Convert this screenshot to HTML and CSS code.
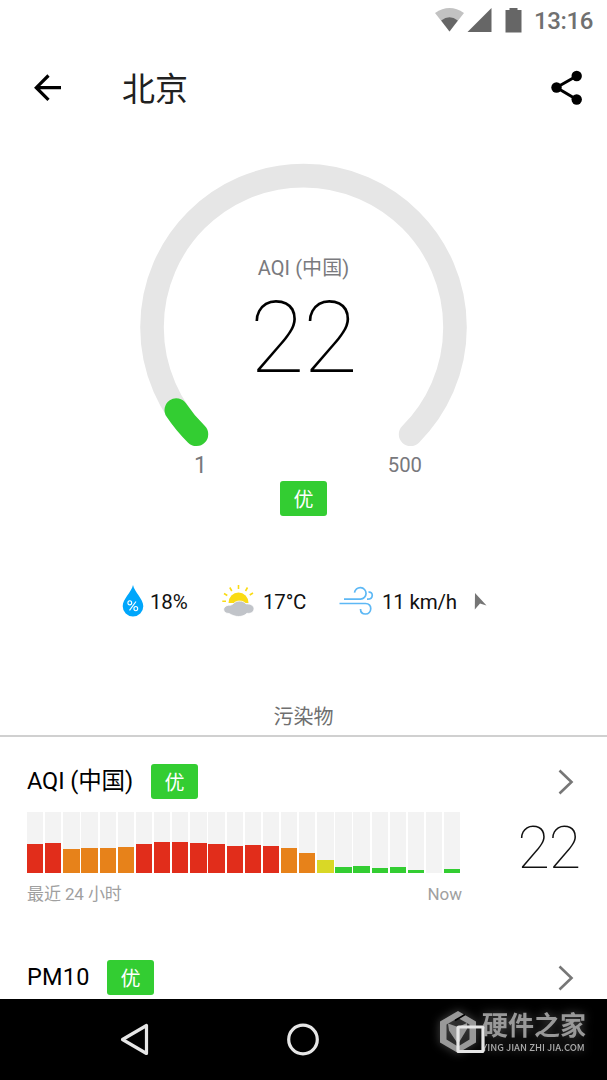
FILE: index.html
```html
<!DOCTYPE html>
<html lang="zh-CN">
<head>
<meta charset="utf-8">
<title>北京</title>
<link rel="stylesheet" href="styles.css">
</head>
<body>
<main class="screen">
  <header class="status">
    <svg class="status-icons" width="90" height="40" viewBox="0 0 90 40">
      <path d="M0 13Q14.500 3 29 13L14.500 31.500Z" fill="#c2c2c2"/>
      <path d="M6.200 20.500Q14.500 14 22.800 20.500L14.500 31.500Z" fill="#666"/>
      <path d="M56.500 8V32H32.500Z" fill="#666"/>
      <path d="M70.500 10h4V8h8v2h4v22.500h-16z" fill="#666"/>
    </svg>
    <span class="clock">13:16</span>
  </header>
  <div class="appbar">
    <svg class="back" width="28" height="28" viewBox="0 0 28 28" fill="none" stroke="#000" stroke-width="3.200"><path d="M27 13.700H3M14.500 1.500L2.300 13.700l12.200 12.200"/></svg>
    <h1 class="title">北京</h1>
    <svg class="share" width="32" height="36" viewBox="0 0 32 36"><path d="M25.700 6L5.500 17.500l20.200 12" fill="none" stroke="#000" stroke-width="3"/><circle cx="25.700" cy="6" r="5.200"/><circle cx="5.500" cy="17.500" r="5.200"/><circle cx="25.700" cy="29.500" r="5.200"/></svg>
  </div>

  <section class="gauge">
    <svg class="dial" width="328" height="290" viewBox="0 0 328 290" fill="none" stroke-width="23.600" stroke-linecap="round">
      <path d="M56.400 271.300A151.500 151.500 0 1 1 270.600 271.300" stroke="#e6e6e6"/>
      <path d="M36.300 247A151.500 151.500 0 0 0 56.400 271.300" stroke="#33cd32"/>
    </svg>
    <div class="reading">
      <span class="caption">AQI (中国)</span>
      <span class="value">22</span>
    </div>
  </section>
  <div class="range"><span class="min">1</span><span class="max">500</span></div>
  <div class="verdict"><span class="badge">优</span></div>

  <section class="weather">
    <svg class="drop" width="22" height="34" viewBox="0 0 22 34"><path d="M11 1C9.500 8 .700 15 .700 22.200a10.300 10.300 0 0 0 20.600 0C21.300 15 12.500 8 11 1z" fill="#00a6fb"/><g fill="none" stroke="#fff" stroke-width="1.100"><ellipse cx="7.800" cy="18.800" rx="1.900" ry="2.100"/><ellipse cx="13.800" cy="24.600" rx="1.900" ry="2.100"/><path d="M14 17.500L7.500 26.300"/></g></svg>
    <span class="humidity">18%</span>
    <svg class="sun" width="34" height="34" viewBox="0 0 34 34"><path d="M6.500 19a10 10.500 0 0 1 20 0z" fill="#fadb14"/><path d="M16.500 5V1M9.800 7L7.800 3.500M23.500 7l2-3.500M5.300 11.500L2 9.500M27.700 11l3.300-2M4 17.200H.300" stroke="#fadb14" stroke-width="1.600"/><path d="M7 29.500C.500 29.500-.500 22.500 6.500 21.200c2 .100 3.500-.200 5-1.700 3-3.300 9.500-3.300 12.500.300 5 0 8 2 8 5 0 3.500-3.500 5-7 4.500-2.500 2.500-5.500 3.200-8.500 3.200s-6-1-9.500-3z" fill="#c1c4c9" stroke="#fff" stroke-width=".8"/></svg>
    <span class="temperature">17°C</span>
    <svg class="wind" width="36" height="30" viewBox="0 0 36 30" fill="none" stroke="#5db8f5" stroke-width="1.700"><path d="M5 13.200h16.500a5.800 5.800 0 1 0-6-6.500M28 13.200c7 .300 6.500-8 1.500-7M.500 17.500H26.500c7.500 0 6.500 10.500 0 10.500-3 0-5-2-5-5"/></svg>
    <span class="speed">11 km/h</span>
    <svg class="pointer" width="13" height="19" viewBox="0 0 13 19"><path d="M1 1L12.500 13.500 6 11.500.800 17.500z" fill="#757575"/></svg>
  </section>

  <h2 class="section-title">污染物</h2>

  <section class="pollutant">
    <div class="row-head">
      <span class="name">AQI (中国)</span><span class="badge">优</span>
      <svg class="chevron" width="16" height="26" viewBox="0 0 16 26"><path d="M1.500 1.500L13.500 13 1.500 24.500"/></svg>
    </div>
    <div class="history">
      <div class="chart">
        <i class="bar red" style="--h:29.3px"></i><i class="bar red" style="--h:29.8px"></i><i class="bar orange" style="--h:24px"></i><i class="bar orange" style="--h:24.8px"></i><i class="bar orange" style="--h:24.8px"></i><i class="bar orange" style="--h:25.8px"></i>
        <i class="bar red" style="--h:28.8px"></i><i class="bar red" style="--h:31px"></i><i class="bar red" style="--h:30.5px"></i><i class="bar red" style="--h:29.8px"></i><i class="bar red" style="--h:28.8px"></i><i class="bar red" style="--h:27px"></i>
        <i class="bar red" style="--h:28px"></i><i class="bar red" style="--h:26.5px"></i><i class="bar orange" style="--h:24.8px"></i><i class="bar orange" style="--h:20.3px"></i><i class="bar yellow" style="--h:12.6px"></i><i class="bar green" style="--h:6.3px"></i>
        <i class="bar green" style="--h:7px"></i><i class="bar green" style="--h:5px"></i><i class="bar green" style="--h:5.8px"></i><i class="bar green" style="--h:3.3px"></i><i class="bar" style="--h:0px"></i><i class="bar green" style="--h:4px"></i>
      </div>
      <span class="current">22</span>
    </div>
    <div class="axis"><span class="span-label">最近 24 小时</span><span>Now</span></div>
  </section>

  <section class="pollutant next">
    <div class="row-head">
      <span class="name pm">PM10</span><span class="badge">优</span>
      <svg class="chevron" width="16" height="26" viewBox="0 0 16 26"><path d="M1.500 1.500L13.500 13 1.500 24.500"/></svg>
    </div>
  </section>

  <nav class="navbar">
    <svg class="nav-back" width="30" height="34" viewBox="0 0 30 34"><path d="M27.500 2.500V30.500L3.500 16.500z"/></svg>
    <svg class="nav-home" width="34" height="34" viewBox="0 0 34 34"><circle cx="17" cy="16.500" r="14.300"/></svg>
    <svg class="nav-recent" width="30" height="30" viewBox="0 0 30 30"><rect x="2" y="2" width="25" height="24.500" rx="1"/></svg>
    <div class="watermark">
      <svg width="38" height="44" viewBox="0 0 38 44"><path fill="#999" fill-rule="evenodd" d="M19 1L37 11.500V32.500L19 43 1 32.500V11.500zM19 8L7.500 14.500V29.500L19 36.500 30.500 29.500V14.500z"/><path fill="#999" d="M9 13.500l10 3.500 9-4v6l-9 15-9-13.500z"/><path d="M16 10.500l10-6" stroke="#000" stroke-width="1.500"/></svg>
      <div class="brand"><span class="brand-cn">硬件之家</span><span class="brand-en">YING JIAN ZHI JIA.COM</span></div>
    </div>
  </nav>
</main>
</body>
</html>
```
FILE: styles.css
```css
* { box-sizing: border-box; }
body { margin: 0; background: #fff; }
svg { display: block; flex: none; }
.screen {
  width: 607px; height: 1080px; overflow: hidden;
  display: flex; flex-direction: column;
  font-family: Roboto, "Noto Sans CJK SC", sans-serif;
  color: #111; white-space: nowrap;
}
.status { height: 40px; display: flex; justify-content: flex-end; padding-right: 13px; flex: none; }
.status-icons { margin-right: 9px; }
.clock { font-size: 24px; font-weight: 500; line-height: 42px; color: #707070; width: 60px; letter-spacing: -.4px; }
.appbar { height: 96px; flex: none; display: flex; align-items: center; padding: 0 24px 0 34px; }
.title { margin: 4px 0 0 60px; font-size: 33px; font-weight: 400; line-height: 40px; color: #212121; }
.share { margin-left: auto; }

.gauge { height: 319px; flex: none; padding: 27px 0 0 140px; display: grid; grid-template-columns: 327px; align-items: start; }
.dial, .reading { grid-area: 1 / 1; }
.reading { padding-top: 91px; display: flex; flex-direction: column; align-items: center; }
.caption { font-size: 20px; line-height: 28px; color: #7a7a7e; letter-spacing: .1px; }
.value { font-size: 100px; font-weight: 100; line-height: 112px; color: #000; letter-spacing: -1.500px; margin-left: -1px; }
.range { height: 26px; flex: none; display: flex; justify-content: space-between; align-items: center; padding: 0 185px 0 194px; color: #78787c; font-size: 20.300px; margin-top: -3px; }
.min { font-size: 23px; padding-top: 1px; }
.verdict { display: flex; justify-content: center; margin-top: 3px; height: 35px; flex: none; }
.badge { width: 47px; height: 35px; border-radius: 3px; background: #33cd32; color: #fff; font-size: 20px; line-height: 38px; text-align: center; }

.weather { height: 40px; margin-top: 65px; padding-left: 122px; display: flex; align-items: center; font-size: 20.500px; flex: none; line-height: 26px; }
.weather span { padding-top: 1px; }
.humidity { margin-left: 6px; width: 72px; letter-spacing: -.2px; }
.temperature { margin-left: 7px; width: 76px; letter-spacing: -.2px; }
.speed { margin-left: 7px; width: 92px; letter-spacing: -.2px; }

.section-title { margin: 79px 0 0; height: 37px; line-height: 35px; border-bottom: 2px solid #d0d0d0; text-align: center; font-size: 20px; font-weight: 400; color: #6f6f6f; flex: none; }
.pollutant { height: 196px; padding: 26px 27px 0; flex: none; }
.row-head { display: flex; align-items: center; height: 36px; }
.name { font-size: 23.500px; line-height: 36px; width: 124px; color: #000; letter-spacing: -.1px; }
.pm { width: 80px; letter-spacing: .2px; }
.chevron { margin: 1px 6px 0 auto; fill: none; stroke: #777; stroke-width: 2.600; }
.history { display: flex; height: 61px; margin-top: 13px; }
.chart { width: 433.500px; height: 61px; display: grid; grid-template-columns: repeat(24, 1fr); column-gap: 1.800px; }
.bar { background: linear-gradient(to top, var(--c, #f3f3f3) var(--h), #f3f3f3 var(--h)); }
.red { --c: #e12d1b; }
.orange { --c: #e7821a; }
.yellow { --c: #d9d826; }
.green { --c: #33cd32; }
.current { margin-left: auto; font-size: 59px; font-weight: 100; line-height: 72px; letter-spacing: -1px; margin-right: 0; }
.axis { width: 435px; display: flex; justify-content: space-between; font-size: 17px; line-height: 26px; margin-top: 8px; color: #a0a0a0; }
.span-label { letter-spacing: -.1px; }
.next { height: 66px; }

.navbar { height: 81px; margin-top: auto; background: #000; flex: none; display: flex; align-items: center; padding-left: 119px; position: relative; fill: none; stroke: #e6e6e6; stroke-width: 3.200; stroke-linejoin: round; }
.nav-home { margin-left: 137px; }
.nav-recent { margin-left: 136px; position: relative; z-index: 1; }
.watermark { position: absolute; left: 439px; top: 11px; display: flex; stroke: none; z-index: 0; filter: drop-shadow(0 0 5px rgba(255,255,255,.3)); }
.brand { display: flex; flex-direction: column; color: #999; margin-left: 5px; }
.brand-cn { font-size: 26px; font-weight: 700; line-height: 33px; }
.brand-en { font-family: "Noto Sans CJK SC", sans-serif; font-size: 9.500px; font-weight: 500; line-height: 9px; color: #aaa; }
```
